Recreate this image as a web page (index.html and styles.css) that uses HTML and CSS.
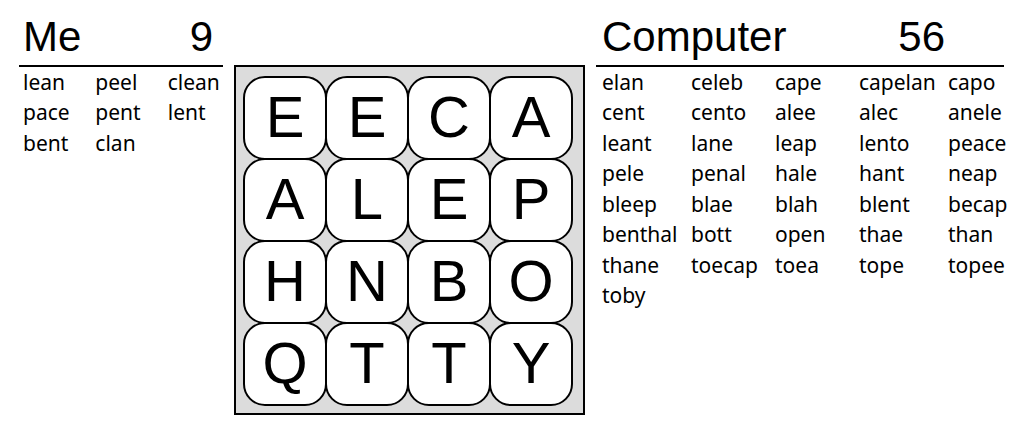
FILE: index.html
```html
<!DOCTYPE html>
<html lang="en">
<head>
<meta charset="utf-8">
<title>Word Game</title>
<link rel="stylesheet" href="styles.css">
</head>
<body>
<main class="game">
  <section class="player player-me">
    <header class="player-head"><h2 class="name">Me</h2><span class="score">9</span></header>
    <ul class="words">
      <li>lean</li><li>peel</li><li>clean</li>
      <li>pace</li><li>pent</li><li>lent</li>
      <li>bent</li><li>clan</li>
    </ul>
  </section>
  <section class="board" aria-label="Letter board">
    <div class="tile">E</div><div class="tile">E</div><div class="tile">C</div><div class="tile">A</div>
    <div class="tile">A</div><div class="tile">L</div><div class="tile">E</div><div class="tile">P</div>
    <div class="tile">H</div><div class="tile">N</div><div class="tile">B</div><div class="tile">O</div>
    <div class="tile">Q</div><div class="tile">T</div><div class="tile">T</div><div class="tile">Y</div>
  </section>
  <section class="player player-computer">
    <header class="player-head"><h2 class="name">Computer</h2><span class="score">56</span></header>
    <ul class="words">
      <li>elan</li><li>celeb</li><li>cape</li><li>capelan</li><li>capo</li>
      <li>cent</li><li>cento</li><li>alee</li><li>alec</li><li>anele</li>
      <li>leant</li><li>lane</li><li>leap</li><li>lento</li><li>peace</li>
      <li>pele</li><li>penal</li><li>hale</li><li>hant</li><li>neap</li>
      <li>bleep</li><li>blae</li><li>blah</li><li>blent</li><li>becap</li>
      <li>benthal</li><li>bott</li><li>open</li><li>thae</li><li>than</li>
      <li>thane</li><li>toecap</li><li>toea</li><li>tope</li><li>topee</li>
      <li>toby</li>
    </ul>
  </section>
</main>
</body>
</html>
```
FILE: styles.css
```css
* {
  box-sizing: border-box;
}

body {
  margin: 0;
  background: #fff;
  color: #000;
  font-family: "Liberation Sans", Arial, sans-serif;
}

.game {
  display: flex;
  align-items: flex-start;
  gap: 11px;
  padding: 9px 20px 0 19px;
}

.player {
  min-width: 0;
}

.player-me {
  flex: 1 1 0;
}

.player-computer {
  flex: 2 1 0;
}

.player-head {
  display: flex;
  justify-content: space-between;
  padding: 0 10px 0 4px;
  border-bottom: 2px solid #000;
  font-size: 42px;
  line-height: 56px;
}

.player-computer .player-head {
  padding: 0 59px 0 6px;
}

.name {
  margin: 0;
  font-size: inherit;
  font-weight: normal;
}

.words {
  display: grid;
  margin: 0;
  padding: 0 0 0 4px;
  list-style: none;
  font-family: "Noto Sans", sans-serif;
  font-size: 21px;
  line-height: 1.45;
}

.player-me .words {
  grid-template-columns: 72fr 72fr 55fr;
}

.player-computer .words {
  grid-template-columns: 89fr 84fr 84fr 89fr 56fr;
  padding-left: 6px;
}

.words li {
  min-width: 0;
}

.board {
  display: grid;
  grid-template-columns: repeat(4, 82px);
  grid-auto-rows: 82px;
  flex: none;
  margin-top: 56px;
  padding: 9px 12px 9px 7px;
  border: 2px solid #000;
  background: #dcdcdc;
}

/* Neighbouring tiles share one border line. */
.tile {
  display: flex;
  align-items: center;
  justify-content: center;
  margin: 0 -2px -2px 0;
  padding-bottom: 2px;
  border: 2px solid #000;
  border-radius: 22px;
  background: #fff;
  font-size: 58px;
  line-height: 1;
}
```
